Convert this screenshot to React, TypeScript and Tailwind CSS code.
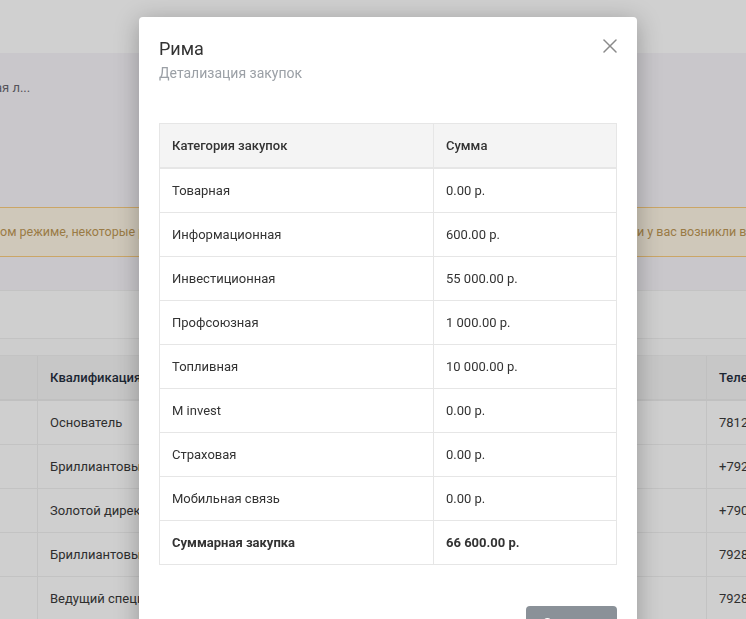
import { X } from "lucide-react";

const purchases = [
  { name: "Товарная", sum: "0.00 р." },
  { name: "Информационная", sum: "600.00 р." },
  { name: "Инвестиционная", sum: "55 000.00 р." },
  { name: "Профсоюзная", sum: "1 000.00 р." },
  { name: "Топливная", sum: "10 000.00 р." },
  { name: "M invest", sum: "0.00 р." },
  { name: "Страховая", sum: "0.00 р." },
  { name: "Мобильная связь", sum: "0.00 р." },
];

const partners = [
  { rank: "Основатель", phone: "78122" },
  { rank: "Бриллиантовый директор", phone: "+7921" },
  { rank: "Золотой директор", phone: "+7903" },
  { rank: "Бриллиантовый директор", phone: "79281" },
  { rank: "Ведущий специалист", phone: "79286" },
];

function BackgroundPage() {
  return (
    <div className="flex flex-col text-[13px]">
      <div className="h-[53px] bg-[#d0d0d0]" />

      <div className="flex h-[237px] flex-col overflow-hidden bg-[#c9c7cb]">
        <div className="mt-[25px] -ml-[5px] leading-5 text-[#55535a] whitespace-nowrap">ая л...</div>
        <div className="mt-[109px] flex h-[50px] items-center overflow-hidden border-y border-[#cba666] bg-[#cfc8ba] text-[12.5px] text-[#9a7b45] whitespace-nowrap">
          <span className="w-[637px] shrink-0 overflow-hidden">
            ом режиме, некоторые разделы могут работать некорректно. Есл
          </span>
          <span>и у вас возникли вопросы, напишите нам</span>
        </div>
      </div>

      <div className="h-[48px] border-t border-[#c3c3c3] bg-[#cfcfcf]" />
      <div className="h-[17px] border-t border-[#c3c3c3] bg-[#cdcdcd]" />

      <div className="overflow-hidden">
        <div className="grid w-[1000px] grid-cols-[37px_300px_369px_294px] border-t border-[#c3c3c3] bg-[#c7c7c7] font-medium text-[#1c2633]">
          <div className="h-[45px] border-b-2 border-[#c0c0c0]" />
          <div className="flex h-[45px] items-center border-b-2 border-l border-[#c0c0c0] px-3 whitespace-nowrap">
            Квалификация
          </div>
          <div className="h-[45px] border-b-2 border-l border-[#c0c0c0]" />
          <div className="flex h-[45px] items-center border-b-2 border-l border-[#c0c0c0] px-3 whitespace-nowrap">
            Телефон
          </div>
        </div>
        {partners.map((p, i) => (
          <div
            key={i}
            className="grid w-[1000px] grid-cols-[37px_300px_369px_294px] bg-[#cfcfcf] text-[#2e2e2e]"
          >
            <div className="h-[44px] border-b border-[#c3c3c3]" />
            <div className="flex h-[44px] items-center border-b border-l border-[#c3c3c3] px-3 whitespace-nowrap">
              {p.rank}
            </div>
            <div className="h-[44px] border-b border-l border-[#c3c3c3]" />
            <div className="flex h-[44px] items-center border-b border-l border-[#c3c3c3] px-3 whitespace-nowrap">
              {p.phone}
            </div>
          </div>
        ))}
      </div>
    </div>
  );
}

function PurchasesModal() {
  return (
    <div className="fixed top-[17px] left-[139px] flex w-[498px] flex-col rounded-[4px] bg-white px-5 pt-[21px] pb-6 shadow-[0_4px_24px_rgba(0,0,0,0.28)]">
      <button className="absolute top-[17px] right-[15px] text-[#8a8a8a]">
        <X size={24} strokeWidth={1.5} />
      </button>

      <div className="text-[18px] leading-[22px] text-[#333]">Рима</div>
      <div className="mt-[3px] text-[14px] leading-5 text-[#9ba0a6]">Детализация закупок</div>

      <div className="mt-[40px] border border-[#e6e6e6] text-[13px] text-[#333]">
        <div className="grid grid-cols-[273px_1fr] border-b-2 border-[#e6e6e6] bg-[#f4f4f4] font-medium">
          <div className="flex h-[43px] items-center px-3">Категория закупок</div>
          <div className="flex h-[43px] items-center border-l border-[#e6e6e6] px-3">Сумма</div>
        </div>
        {purchases.map((row) => (
          <div key={row.name} className="grid grid-cols-[273px_1fr] border-b border-[#e6e6e6]">
            <div className="flex h-[43px] items-center px-3">{row.name}</div>
            <div className="flex h-[43px] items-center border-l border-[#e6e6e6] px-3">{row.sum}</div>
          </div>
        ))}
        <div className="grid grid-cols-[273px_1fr] font-bold">
          <div className="flex h-[43px] items-center px-3">Суммарная закупка</div>
          <div className="flex h-[43px] items-center border-l border-[#e6e6e6] px-3">66 600.00 р.</div>
        </div>
      </div>

      <button className="mt-[41px] h-9 w-[91px] self-end rounded-[4px] bg-[#8a9198] text-[14px] text-white">
        Закрыть
      </button>
    </div>
  );
}

export default function App() {
  return (
    <div className="relative h-[619px] overflow-hidden font-['Roboto',sans-serif]">
      <BackgroundPage />
      <PurchasesModal />
    </div>
  );
}
